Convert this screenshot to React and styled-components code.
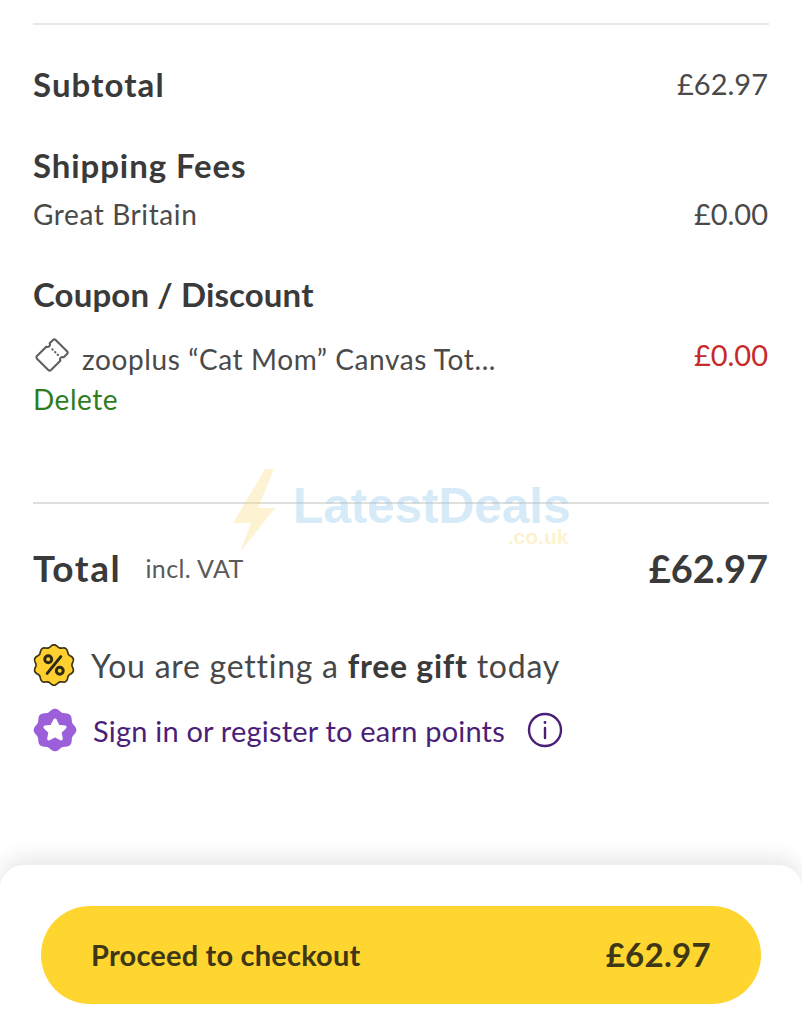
import styled, { createGlobalStyle } from "styled-components";

const GlobalStyle = createGlobalStyle`
  html, body {
    margin: 0;
    padding: 0;
    background: #fff;
    font-family: "Lato", "Noto Sans", sans-serif;
    color: #3c3c3c;
  }
`;

const Page = styled.div`
  width: 802px;
  height: 1024px;
  overflow: hidden;
  position: relative;
  padding-top: 23px;
  box-sizing: border-box;
`;

const Summary = styled.section`
  margin: 0 33px;
  border-top: 2px solid #e9e8e3;
`;

const Row = styled.div`
  display: flex;
  justify-content: space-between;
  align-items: ${({ $align }) => $align || "center"};
  height: ${({ $h }) => $h}px;
  margin-top: ${({ $top }) => $top || 0}px;
  padding-right: 1px;
`;

const Heading = styled.h3`
  margin: 0;
  font-size: 33px;
  line-height: 40px;
  font-weight: 700;
  letter-spacing: ${({ $ls }) => $ls ?? 0.6}px;
  color: #3a3a3a;
`;

const Label = styled.span`
  font-size: 28px;
  line-height: 36px;
  letter-spacing: 0.6px;
  color: #4a4a4a;
`;

const CouponLabel = styled(Label)`
  margin-top: 4px;
`;

const Price = styled.span`
  font-size: 29px;
  line-height: 36px;
  color: ${({ $red }) => ($red ? "#c62a2a" : "#4a4a4a")};
`;

const Coupon = styled.div`
  display: flex;
  align-items: flex-start;
  gap: 13px;
  margin-left: 2px;
`;

const Ticket = styled.svg`
  margin-top: 1px;
`;

const DeleteLink = styled.a`
  display: block;
  margin-top: 4px;
  font-size: 28px;
  line-height: 36px;
  letter-spacing: 0.5px;
  color: #2f7d1f;
`;

const Rule = styled.div`
  height: 2px;
  background: #dfdfdc;
  margin-top: 85px;
`;

const TotalLabel = styled.div`
  display: flex;
  align-items: center;
  gap: 24px;
`;

const TotalHeading = styled(Heading)`
  font-size: 37px;
  letter-spacing: 1.6px;
`;

const Vat = styled.span`
  font-size: 25px;
  letter-spacing: 0.4px;
  color: #5a5a5a;
`;

const TotalPrice = styled.span`
  font-size: 38px;
  font-weight: 700;
  color: #3a3a3a;
`;

const Perk = styled.div`
  display: flex;
  align-items: center;
  gap: ${({ $gap }) => $gap}px;
  height: 44px;
  margin-top: ${({ $top }) => $top}px;
`;

const GiftText = styled.span`
  font-size: 32px;
  letter-spacing: 0.75px;
  color: #484848;
  b {
    font-weight: 700;
    color: #3a3a3a;
  }
`;

const PointsText = styled.span`
  font-size: 29px;
  letter-spacing: 0.2px;
  color: #4b1f78;
`;

const InfoIcon = styled.svg`
  margin-left: 6px;
`;

const Watermark = styled.div`
  position: absolute;
  left: 232px;
  top: 468px;
  display: flex;
  pointer-events: none;
`;

const Brand = styled.div`
  display: flex;
  flex-direction: column;
  align-items: flex-end;
  margin-left: 15px;
  margin-top: 13px;
`;

const BrandName = styled.span`
  font-family: "Liberation Sans", sans-serif;
  font-weight: 700;
  font-size: 50px;
  line-height: 50px;
  letter-spacing: -0.3px;
  color: rgba(150, 200, 235, 0.38);
`;

const BrandTld = styled.span`
  font-family: "Liberation Sans", sans-serif;
  font-weight: 700;
  font-size: 21px;
  line-height: 12px;
  margin-right: 2px;
  color: rgba(250, 220, 130, 0.4);
`;

const Footer = styled.footer`
  position: absolute;
  left: 0;
  right: 0;
  bottom: 0;
  height: 159px;
  box-sizing: border-box;
  padding: 41px 41px 0;
  background: #fff;
  border-radius: 24px 24px 0 0;
  box-shadow: 0 -8px 20px rgba(0, 0, 0, 0.09);
`;

const CheckoutButton = styled.button`
  width: 100%;
  height: 98px;
  border: none;
  border-radius: 49px;
  background: #ffd530;
  padding: 0 50px 2px;
  display: flex;
  justify-content: space-between;
  align-items: center;
  font-family: inherit;
  color: #3d3716;
  font-weight: 700;
`;

const CheckoutLabel = styled.span`
  font-size: 29px;
  letter-spacing: 0.2px;
`;

const CheckoutPrice = styled.span`
  font-size: 33px;
  letter-spacing: 0.3px;
`;

function TicketIcon() {
  return (
    <Ticket width="34" height="34" viewBox="0 0 36 36" fill="none" stroke="#5f5f5f" strokeWidth="2.2" strokeLinejoin="round">
      <g transform="rotate(-45 18 18)">
        <path d="M6 7.5 H20 A2.6 2.6 0 0 0 25 7.5 H30 A2 2 0 0 1 32 9.5 V26.5 A2 2 0 0 1 30 28.5 H25 A2.6 2.6 0 0 0 20 28.5 H6 A2 2 0 0 1 4 26.5 V9.5 A2 2 0 0 1 6 7.5 Z" />
        <path d="M22.5 14v.5M22.5 18v.5M22.5 22v.5" strokeLinecap="round" />
      </g>
    </Ticket>
  );
}

// scalloped badge outline, sampled around a circle
function scallopPath(lobes, radius, depth) {
  const points = [];
  for (let i = 0; i < 120; i++) {
    const a = (i / 120) * Math.PI * 2 - Math.PI / 2;
    const r = radius + depth * Math.cos(lobes * (a + Math.PI / 2));
    points.push(`${(20 + r * Math.cos(a)).toFixed(2)} ${(20 + r * Math.sin(a)).toFixed(2)}`);
  }
  return `M${points.join(" L")} Z`;
}

function PercentBadge() {
  return (
    <svg width="42" height="42" viewBox="0 0 40 40">
      <path d={scallopPath(10, 18.2, 1.1)} fill="#ffd02f" stroke="#3a3212" strokeWidth="1.6" />
      <circle cx="14.5" cy="14.5" r="3.3" fill="none" stroke="#2e2a16" strokeWidth="2.8" />
      <circle cx="25.5" cy="25.5" r="3.3" fill="none" stroke="#2e2a16" strokeWidth="2.8" />
      <path d="M26.5 12 L13.5 28" stroke="#2e2a16" strokeWidth="2.8" strokeLinecap="round" />
    </svg>
  );
}

function StarBadge() {
  return (
    <svg width="44" height="44" viewBox="0 0 40 40">
      <path d={scallopPath(8, 18.2, 1.2)} fill="#9b5fd9" />
      <path
        d="M20 11 L22.8 16.6 L29 17.5 L24.5 21.8 L25.6 28 L20 25 L14.4 28 L15.5 21.8 L11 17.5 L17.2 16.6 Z"
        fill="#fff"
        stroke="#fff"
        strokeWidth="3"
        strokeLinejoin="round"
      />
    </svg>
  );
}

function BoltIcon() {
  return (
    <svg width="46" height="86" viewBox="0 0 46 86">
      <path d="M33 1 L42 1 L26 40 L43 40 L8 84 L19 55 L1 55 Z" fill="rgba(250, 220, 130, 0.36)" />
    </svg>
  );
}

export default function App() {
  return (
    <Page>
      <GlobalStyle />
      <Summary>
        <Row $h={40} $top={39}>
          <Heading $ls={1.1}>Subtotal</Heading>
          <Price>£62.97</Price>
        </Row>
        <Row $h={40} $top={41}>
          <Heading $ls={0.9}>Shipping Fees</Heading>
        </Row>
        <Row $h={36} $top={11}>
          <Label>Great Britain</Label>
          <Price>£0.00</Price>
        </Row>
        <Row $h={40} $top={42}>
          <Heading $ls={0.13}>Coupon / Discount</Heading>
        </Row>
        <Row $h={40} $top={23} $align="flex-start">
          <Coupon>
            <TicketIcon />
            <CouponLabel>zooplus “Cat Mom” Canvas Tot...</CouponLabel>
          </Coupon>
          <Price $red>£0.00</Price>
        </Row>
        <DeleteLink>Delete</DeleteLink>
        <Rule />
        <Row $h={48} $top={40}>
          <TotalLabel>
            <TotalHeading>Total</TotalHeading>
            <Vat>incl. VAT</Vat>
          </TotalLabel>
          <TotalPrice>£62.97</TotalPrice>
        </Row>
        <Perk $gap={16} $top={51}>
          <PercentBadge />
          <GiftText>
            You are getting a <b>free gift</b> today
          </GiftText>
        </Perk>
        <Perk $gap={16} $top={21}>
          <StarBadge />
          <PointsText>Sign in or register to earn points</PointsText>
          <InfoIcon width="36" height="36" viewBox="0 0 36 36" fill="none" stroke="#4b1f78" strokeWidth="2.4">
            <circle cx="18" cy="18" r="16" />
            <path d="M18 16v10" strokeLinecap="round" />
            <circle cx="18" cy="10.5" r="1.4" fill="#4b1f78" stroke="none" />
          </InfoIcon>
        </Perk>
      </Summary>
      <Watermark>
        <BoltIcon />
        <Brand>
          <BrandName>LatestDeals</BrandName>
          <BrandTld>.co.uk</BrandTld>
        </Brand>
      </Watermark>
      <Footer>
        <CheckoutButton>
          <CheckoutLabel>Proceed to checkout</CheckoutLabel>
          <CheckoutPrice>£62.97</CheckoutPrice>
        </CheckoutButton>
      </Footer>
    </Page>
  );
}
